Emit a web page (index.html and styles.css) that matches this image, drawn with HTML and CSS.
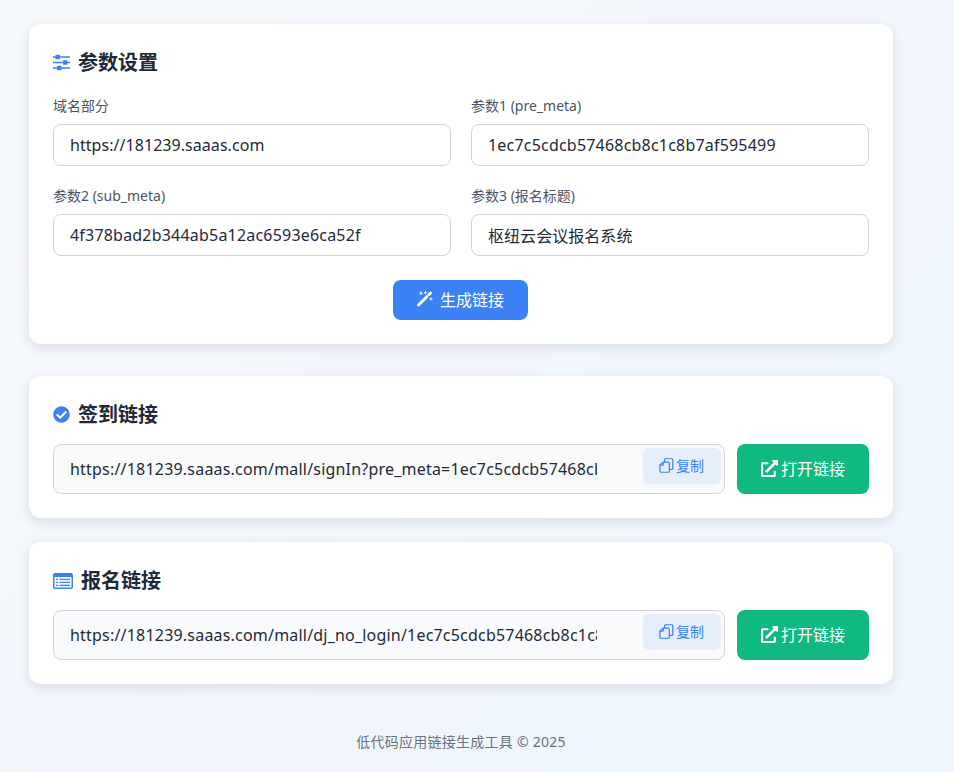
FILE: index.html
```html
<!DOCTYPE html>
<html lang="zh-CN">
<head>
<meta charset="utf-8">
<title>低代码应用链接生成工具</title>
<link rel="stylesheet" href="styles.css">
</head>
<body>
<main class="container">
  <section class="card card-params">
    <h2 class="card-title">
      <svg class="title-icon" viewBox="0 0 17 17"><path d="M0 3h17M0 8.500h17M0 14h17" fill="none" stroke="#3b82f6" stroke-width="1.500"/><g fill="#3b82f6"><rect x="2.500" y=".8" width="4.500" height="4.400" rx=".6"/><rect x="10" y="6.300" width="4.500" height="4.400" rx=".6"/><rect x="4" y="11.800" width="4.500" height="4.400" rx=".6"/></g></svg>
      参数设置
    </h2>
    <div class="form-grid">
      <div class="field"><label class="field-label" for="f1">域名部分</label><input class="text-input" id="f1" value="https://181239.saaas.com"></div>
      <div class="field"><label class="field-label" for="f2">参数1 (pre_meta)</label><input class="text-input hex-input" id="f2" value="1ec7c5cdcb57468cb8c1c8b7af595499"></div>
      <div class="field"><label class="field-label" for="f3">参数2 (sub_meta)</label><input class="text-input hex-input" id="f3" value="4f378bad2b344ab5a12ac6593e6ca52f"></div>
      <div class="field"><label class="field-label" for="f4">参数3 (报名标题)</label><input class="text-input" id="f4" value="枢纽云会议报名系统"></div>
    </div>
    <div class="generate-row">
      <button class="btn-generate">
        <svg class="btn-icon" viewBox="0 0 16 16"><path d="M1.500 14 9.800 5.700" stroke="#fff" stroke-width="3" stroke-linecap="round" fill="none"/><path d="M12 3.500 13.500 2" stroke="#fff" stroke-width="3" stroke-linecap="round" fill="none"/><path d="M3.500 .5h1v1.200h1.200v1H4.500v1.200h-1V2.700H2.300v-1h1.200zM8 .2h1v1h1v1H9v1H8v-1H7v-1h1zM13.500 6.500h1v1h1v1h-1v1h-1v-1h-1v-1h1z" fill="#fff"/></svg>
        生成链接
      </button>
    </div>
  </section>

  <section class="card card-link">
    <h2 class="card-title">
      <svg class="title-icon" viewBox="0 0 512 512"><path fill="#3b82f6" d="M504 256c0 136.967-111.033 248-248 248S8 392.967 8 256 119.033 8 256 8s248 111.033 248 248zM227.314 387.314l184-184c6.248-6.248 6.248-16.379 0-22.627l-22.627-22.627c-6.248-6.249-16.379-6.249-22.628 0L216 308.118l-70.059-70.059c-6.248-6.248-16.379-6.248-22.628 0l-22.627 22.627c-6.248 6.248-6.248 16.379 0 22.627l104 104c6.249 6.249 16.379 6.249 22.628.001z"/></svg>
      签到链接
    </h2>
    <div class="link-row">
      <div class="link-field">
        <input class="link-input" readonly value="https://181239.saaas.com/mall/signIn?pre_meta=1ec7c5cdcb57468cb8c1c8b7af595499&amp;sub_meta=4f378bad2b344ab5a12ac6593e6ca52f">
        <button class="btn-copy">
          <svg class="copy-icon" viewBox="0 0 16 16"><g fill="none" stroke="#3b82f6" stroke-width="1.300" stroke-linejoin="round"><path d="M6 4.500V1.800a1 1 0 0 1 1-1h6.700a1 1 0 0 1 1 1v9.400a1 1 0 0 1-1 1H11"/><path d="M1 7.500 4.500 4.500H10a1 1 0 0 1 1 1V14.200a1 1 0 0 1-1 1H2a1 1 0 0 1-1-1z"/><path d="M1 7.500h3.500V4.500"/></g></svg>
          复制
        </button>
      </div>
      <button class="btn-open">
        <svg class="open-icon" viewBox="0 0 512 512"><path fill="#fff" d="M432,320H400a16,16,0,0,0-16,16V448H64V128H208a16,16,0,0,0,16-16V80a16,16,0,0,0-16-16H48A48,48,0,0,0,0,112V464a48,48,0,0,0,48,48H400a48,48,0,0,0,48-48V336A16,16,0,0,0,432,320ZM488,0h-128c-21.370,0-32.050,25.910-17,41l35.730,35.730L135,320.370a24,24,0,0,0,0,34L157.670,377a24,24,0,0,0,34,0L435.280,133.320,471,169c15,15,41,4.500,41-17V24A24,24,0,0,0,488,0Z"/></svg>
        打开链接
      </button>
    </div>
  </section>

  <section class="card card-link">
    <h2 class="card-title">
      <svg class="title-icon icon-list" viewBox="0 0 20 16"><rect width="20" height="16" rx="2" fill="#3b82f6"/><rect x="1.500" y="4" width="17" height="10.500" fill="#f5f9ff"/><path d="M3 6.300h2M3 9.300h2M3 12.300h2M6.500 6.300H17M6.500 9.300H17M6.500 12.300H17" stroke="#3b82f6" stroke-width="1.300"/></svg>
      报名链接
    </h2>
    <div class="link-row">
      <div class="link-field">
        <input class="link-input" readonly value="https://181239.saaas.com/mall/dj_no_login/1ec7c5cdcb57468cb8c1c8b7af595499/4f378bad2b344ab5a12ac6593e6ca52f">
        <button class="btn-copy">
          <svg class="copy-icon" viewBox="0 0 16 16"><g fill="none" stroke="#3b82f6" stroke-width="1.300" stroke-linejoin="round"><path d="M6 4.500V1.800a1 1 0 0 1 1-1h6.700a1 1 0 0 1 1 1v9.400a1 1 0 0 1-1 1H11"/><path d="M1 7.500 4.500 4.500H10a1 1 0 0 1 1 1V14.200a1 1 0 0 1-1 1H2a1 1 0 0 1-1-1z"/><path d="M1 7.500h3.500V4.500"/></g></svg>
          复制
        </button>
      </div>
      <button class="btn-open">
        <svg class="open-icon" viewBox="0 0 512 512"><path fill="#fff" d="M432,320H400a16,16,0,0,0-16,16V448H64V128H208a16,16,0,0,0,16-16V80a16,16,0,0,0-16-16H48A48,48,0,0,0,0,112V464a48,48,0,0,0,48,48H400a48,48,0,0,0,48-48V336A16,16,0,0,0,432,320ZM488,0h-128c-21.370,0-32.050,25.910-17,41l35.730,35.730L135,320.370a24,24,0,0,0,0,34L157.670,377a24,24,0,0,0,34,0L435.280,133.320,471,169c15,15,41,4.500,41-17V24A24,24,0,0,0,488,0Z"/></svg>
        打开链接
      </button>
    </div>
  </section>

  <footer class="page-footer">低代码应用链接生成工具 © 2025</footer>
</main>
</body>
</html>
```

FILE: styles.css
```css
* { box-sizing: border-box; }
html, body { margin: 0; height: 100%; }
body {
  background: linear-gradient(135deg, #f5f7fa 0%, #eff6ff 100%);
  font-family: "Noto Sans", "Noto Sans CJK SC", sans-serif;
  color: #1f2937;
  overflow: hidden;
}
.container {
  width: 864px;
  margin-left: 29px;
  padding-top: 24px;
}
.card {
  background: #fff;
  border-radius: 12px;
  box-shadow: 0 4px 12px rgba(0, 0, 0, 0.1);
  padding: 24px;
}
.card-params { margin-bottom: 32px; height: 320px; }
.card-link { margin-bottom: 24px; height: 142px; }
.card-title {
  display: flex;
  align-items: center;
  gap: 8px;
  margin: 0 0 16px;
  height: 28px;
  padding-top: 1px;
  font-size: 20px;
  line-height: 28px;
  font-weight: 700;
  color: #1f2937;
}
.card-params .card-title { margin-bottom: 20px; }
.title-icon { width: 17px; height: 17px; }
.icon-list { width: 20px; height: 16px; }
.form-grid {
  display: grid;
  grid-template-columns: 1fr 1fr;
  column-gap: 20px;
  row-gap: 20px;
  margin: 0 0 24px;
}
.field { display: flex; flex-direction: column; }
.field-label {
  font-size: 14px;
  line-height: 20px;
  color: #4b5563;
  margin-bottom: 8px;
}
.text-input {
  height: 42px;
  padding: 0 16px;
  border: 1px solid #d1d5db;
  border-radius: 8px;
  background: #fff;
  font: 16px "Noto Sans", "Noto Sans CJK SC", sans-serif;
  letter-spacing: 0.05px;
  color: #1f2937;
}
.hex-input { letter-spacing: 0.2px; }
.generate-row { display: flex; justify-content: center; padding-right: 1px; }
.btn-generate {
  display: flex;
  align-items: center;
  justify-content: center;
  gap: 7px;
  width: 135px;
  height: 40px;
  padding: 0 0 2px;
  border: 0;
  border-radius: 8px;
  background: #3b82f6;
  color: #fff;
  font: 16px "Noto Sans", "Noto Sans CJK SC", sans-serif;
}
.btn-icon { width: 16px; height: 16px; }
.link-row { display: flex; gap: 12px; }
.link-field { position: relative; flex: 1; }
.link-input {
  display: block;
  width: 100%;
  height: 50px;
  padding: 0 127px 0 16px;
  border: 1px solid #d1d5db;
  border-radius: 8px;
  background: #f9fafb;
  font: 16px "Noto Sans", "Noto Sans CJK SC", sans-serif;
  letter-spacing: 0.2px;
  color: #1f2937;
}
.btn-copy {
  position: absolute;
  top: 4px;
  right: 4px;
  display: flex;
  align-items: center;
  justify-content: center;
  gap: 2px;
  width: 78px;
  height: 36px;
  padding: 0 1px 2px 0;
  border: 0;
  border-radius: 6px;
  background: #e6edfb;
  color: #3b82f6;
  font: 14px "Noto Sans", "Noto Sans CJK SC", sans-serif;
}
.copy-icon { width: 15px; height: 15px; }
.btn-open {
  display: flex;
  align-items: center;
  justify-content: center;
  gap: 3px;
  width: 132px;
  height: 50px;
  padding: 0 0 2px;
  border: 0;
  border-radius: 8px;
  background: #10b981;
  color: #fff;
  font: 16px "Noto Sans", "Noto Sans CJK SC", sans-serif;
}
.open-icon { width: 17px; height: 17px; }
.page-footer {
  margin-top: 48px;
  text-align: center;
  font-size: 14px;
  line-height: 20px;
  letter-spacing: 0.25px;
  color: #6b7280;
}
```
